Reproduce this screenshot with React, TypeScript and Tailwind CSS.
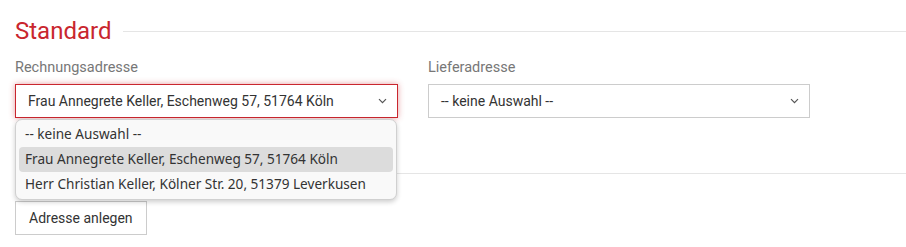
import React from 'react';

function Chevron() {
  return (
    <svg width="9" height="6" viewBox="0 0 9 6" className="shrink-0">
      <path d="M1 1.2l3.5 3.5 3.5-3.5" fill="none" stroke="#555" strokeWidth="1.2" />
    </svg>
  );
}

const options = [
  '-- keine Auswahl --',
  'Frau Annegrete Keller, Eschenweg 57, 51764 Köln',
  'Herr Christian Keller, Kölner Str. 20, 51379 Leverkusen',
];

export default function App() {
  return (
    <div className="relative w-[906px] h-[247px] bg-white font-['Roboto',sans-serif] text-[#333] pl-[15px]">
      <div className="flex items-center pt-[16px]">
        <h1 className="text-[24px] leading-[30px] text-[#c9262e]">Standard</h1>
        <div className="flex-1 h-px bg-[#e5e5e5] ml-[12px]" />
      </div>

      <div className="flex gap-[30px] mt-[12px]">
        <div className="w-[383px]">
          <label className="block text-[14.5px] leading-[20px] text-[#777] mb-[6px]">Rechnungsadresse</label>
          <div className="h-[34px] flex items-center justify-between pl-[12px] pr-[10px] border border-[#c9262e] shadow-[0_0_6px_rgba(201,38,46,0.45)] text-[14px]">
            <span>Frau Annegrete Keller, Eschenweg 57, 51764 Köln</span>
            <Chevron />
          </div>
        </div>
        <div className="w-[382px]">
          <label className="block text-[14.5px] leading-[20px] text-[#777] mb-[6px]">Lieferadresse</label>
          <div className="h-[34px] flex items-center justify-between pl-[12px] pr-[10px] border border-[#ccc] text-[14px]">
            <span>-- keine Auswahl --</span>
            <Chevron />
          </div>
        </div>
      </div>

      <div className="h-px bg-[#e5e5e5] mt-[55px]" />

      <button className="mt-[27px] h-[34px] px-[13px] border border-[#ccc] bg-white text-[14px] text-[#333]">
        Adresse anlegen
      </button>

      <div className="absolute left-[15px] top-[119px] w-[382px] h-[81px] rounded-[7px] border border-[#d0d0d0] bg-[#f9f9f9] shadow-[0_2px_5px_rgba(0,0,0,0.2)] px-[3px] py-[2px] font-['Noto_Sans',sans-serif] text-[13.6px] text-[#333]">
        {options.map((o, i) => (
          <div
            key={o}
            className={
              'h-[25px] flex items-center px-[6px] rounded-[4px] ' + (i === 1 ? 'bg-[#dcdcdc]' : '')
            }
          >
            {o}
          </div>
        ))}
      </div>
    </div>
  );
}
